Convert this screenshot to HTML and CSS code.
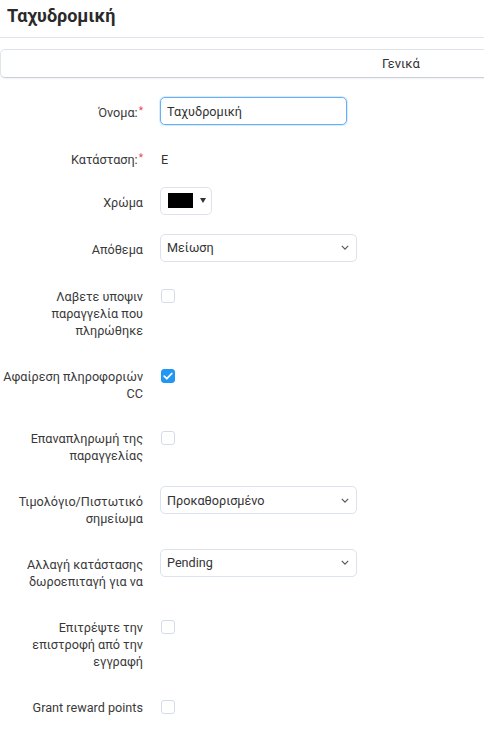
FILE: index.html
```html
<!DOCTYPE html>
<html lang="el">
<head>
<meta charset="utf-8">
<title>Ταχυδρομική</title>
<link rel="stylesheet" href="styles.css">
</head>
<body>
<div class="page">
  <h1 class="title">Ταχυδρομική</h1>
  <div class="divider"></div>
  <div class="tabs"><span class="tab">Γενικά</span></div>
  <form class="form">
    <div class="row">
      <label class="label">Όνομα:<span class="req">*</span></label>
      <div class="field"><input class="input focus" type="text" value="Ταχυδρομική"></div>
    </div>
    <div class="row row-static">
      <label class="label">Κατάσταση:<span class="req">*</span></label>
      <div class="field"><span class="static">E</span></div>
    </div>
    <div class="row">
      <label class="label">Χρώμα</label>
      <div class="field">
        <div class="color"><span class="swatch"></span><span class="caret"></span></div>
      </div>
    </div>
    <div class="row">
      <label class="label">Απόθεμα</label>
      <div class="field"><div class="select">Μείωση<svg class="chev" viewBox="0 0 10 6" width="8" height="5"><path d="M1 1l4 4 4-4" fill="none" stroke="#555" stroke-width="1.4"/></svg></div></div>
    </div>
    <div class="row">
      <label class="label">Λαβετε υποψιν παραγγελία που πληρώθηκε</label>
      <div class="field"><span class="check"></span></div>
    </div>
    <div class="row">
      <label class="label">Αφαίρεση πληροφοριών CC</label>
      <div class="field"><span class="check on"><svg viewBox="0 0 14 14" width="14" height="14"><path d="M3.2 7.2l2.6 2.5 5-5.2" fill="none" stroke="#fff" stroke-width="1.8" stroke-linecap="round" stroke-linejoin="round"/></svg></span></div>
    </div>
    <div class="row">
      <label class="label">Επαναπληρωμή της παραγγελίας</label>
      <div class="field"><span class="check"></span></div>
    </div>
    <div class="row">
      <label class="label">Τιμολόγιο/Πιστωτικό σημείωμα</label>
      <div class="field"><div class="select">Προκαθορισμένο<svg class="chev" viewBox="0 0 10 6" width="8" height="5"><path d="M1 1l4 4 4-4" fill="none" stroke="#555" stroke-width="1.4"/></svg></div></div>
    </div>
    <div class="row">
      <label class="label">Αλλαγή κατάστασης δωροεπιταγή για να</label>
      <div class="field"><div class="select">Pending<svg class="chev" viewBox="0 0 10 6" width="8" height="5"><path d="M1 1l4 4 4-4" fill="none" stroke="#555" stroke-width="1.4"/></svg></div></div>
    </div>
    <div class="row">
      <label class="label">Επιτρέψτε την επιστροφή από την εγγραφή</label>
      <div class="field"><span class="check"></span></div>
    </div>
    <div class="row">
      <label class="label">Grant reward points</label>
      <div class="field"><span class="check"></span></div>
    </div>
  </form>
</div>
</body>
</html>
```
FILE: styles.css
```css
html, body {
  margin: 0;
  padding: 0;
  background: #fff;
}
body {
  font-family: Roboto, "Noto Sans", sans-serif;
  font-size: 12.65px;
  color: #333;
  overflow: hidden;
}
.page {
  width: 484px;
  overflow: hidden;
}
.title {
  margin: 0;
  padding: 5px 7px 0;
  height: 32px;
  box-sizing: border-box;
  font-size: 18px;
  font-weight: 700;
  color: #2a2a2a;
  line-height: 22px;
}
.divider {
  margin-top: 5px;
  height: 1px;
  background: #e1e4ec;
}
.tabs {
  margin-top: 11px;
  width: 802px;
  height: 29px;
  box-sizing: border-box;
  border: 1px solid #dfe3ec;
  border-bottom-color: #c9cfdb;
  border-radius: 5px;
  box-shadow: 0 1px 2px rgba(0,0,0,0.06);
  display: flex;
  align-items: center;
  justify-content: center;
}
.tab {
  color: #333;
  font-size: 13px;
}
.form {
  padding-top: 19px;
}
.row {
  display: flex;
  gap: 17px;
  margin-bottom: 19px;
}
.row-static {
  margin-bottom: 16px;
}
.label {
  width: 143px;
  flex: none;
  text-align: right;
  padding: 7px 0 2.8px;
  line-height: 17px;
  color: #3a3a3a;
}
.req {
  color: #e5484d;
  font-size: 10px;
  vertical-align: top;
  margin-left: 1px;
  position: relative;
  top: -2px;
}
.field {
  flex: none;
  display: flex;
  align-items: flex-start;
}
.input {
  width: 187px;
  height: 28px;
  box-sizing: border-box;
  border: 1px solid #dde3ec;
  border-radius: 5px;
  padding: 0 6px;
  font: inherit;
  color: #333;
  outline: none;
}
.input.focus {
  border-color: #66b1f5;
  box-shadow: 0 0 0 1px rgba(102,177,245,0.25);
}
.static {
  padding-top: 7px;
  line-height: 17px;
  padding-left: 1px;
}
.color {
  width: 52px;
  height: 28px;
  box-sizing: border-box;
  border: 1px solid #dde3ec;
  border-radius: 5px;
  display: flex;
  align-items: center;
  padding-left: 7px;
  gap: 6px;
}
.swatch {
  width: 25px;
  height: 15px;
  background: #000;
}
.caret {
  width: 0;
  height: 0;
  border-left: 3.5px solid transparent;
  border-right: 3.5px solid transparent;
  border-top: 5px solid #333;
  margin-left: 1px;
}
.select {
  width: 197px;
  height: 28px;
  box-sizing: border-box;
  border: 1px solid #dde3ec;
  border-radius: 5px;
  padding: 0 6px 0 6px;
  display: flex;
  align-items: center;
  justify-content: space-between;
  color: #333;
}
.chev {
  margin-right: 1px;
}
.check {
  margin-top: 8px;
  margin-left: 1px;
  width: 14px;
  height: 14px;
  box-sizing: border-box;
  border: 1px solid #d5dbe6;
  border-radius: 3px;
  background: #fff;
  display: block;
}
.check.on {
  background: #2196f3;
  border-color: #2196f3;
}
.check.on svg {
  display: block;
  margin: -1px;
}
```
